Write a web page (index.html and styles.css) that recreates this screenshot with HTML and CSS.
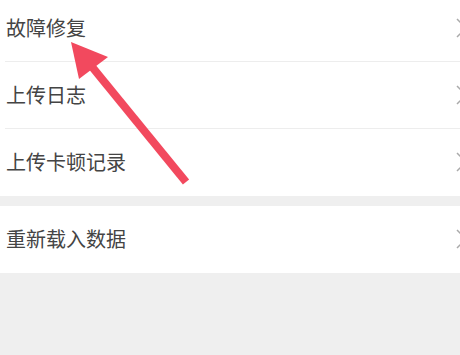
FILE: index.html
```html
<!DOCTYPE html>
<html lang="zh-CN">
<head>
  <meta charset="UTF-8">
  <meta name="viewport" content="width=device-width, initial-scale=1.0">
  <title>设置</title>
  <link rel="stylesheet" href="styles.css">
</head>
<body>
  <div class="page">
    <ul class="menu menu-first">
      <li class="menu-item"><span class="label">故障修复</span><svg class="chevron" viewBox="0 0 12 20"><polyline points="1,1 10,10 1,19"/></svg></li>
      <li class="menu-item"><span class="label">上传日志</span><svg class="chevron" viewBox="0 0 12 20"><polyline points="1,1 10,10 1,19"/></svg></li>
      <li class="menu-item"><span class="label">上传卡顿记录</span><svg class="chevron" viewBox="0 0 12 20"><polyline points="1,1 10,10 1,19"/></svg></li>
    </ul>

    <ul class="menu">
      <li class="menu-item"><span class="label">重新载入数据</span><svg class="chevron" viewBox="0 0 12 20"><polyline points="1,1 10,10 1,19"/></svg></li>
    </ul>

    <!-- annotation arrow drawn over the list -->
    <svg class="arrow" width="460" height="355" viewBox="0 0 460 355">
      <line x1="84" y1="62" x2="186" y2="187" stroke="#f2495e" stroke-width="8"/>
      <polygon points="71,47 108,62 79,84" fill="#f2495e"/>
    </svg>
  </div>
</body>
</html>
```

FILE: styles.css
```css
/* Global */
html, body {
  margin: 0;
  padding: 0;
  background-color: #efefef;
  overflow: hidden;
}

body {
  font-family: 'Noto Sans CJK SC', 'Noto Sans', sans-serif;
  color: #444;
}

.page {
  position: relative;
  width: 460px;
  height: 355px;
}

/* Menu list */
.menu {
  list-style: none;
  margin: 0 0 10px 0;
  padding: 0 0 0 5px;
  background: #ffffff;
}

.menu-first {
  margin-top: -5px;
}

.menu-item {
  display: flex;
  align-items: center;
  height: 66px;
  border-bottom: 1px solid #ededed;
}

.menu-item:last-child {
  border-bottom-color: #ffffff;
}

.label {
  flex: 1;
  padding-left: 1px;
  font-size: 20px;
  line-height: 1;
}

.chevron {
  width: 12px;
  height: 20px;
  margin-right: -8px;
  fill: none;
  stroke: #aaaaaa;
  stroke-width: 1.5;
}

/* Annotation */
.arrow {
  position: absolute;
  left: 0;
  top: 0;
  pointer-events: none;
}
```
